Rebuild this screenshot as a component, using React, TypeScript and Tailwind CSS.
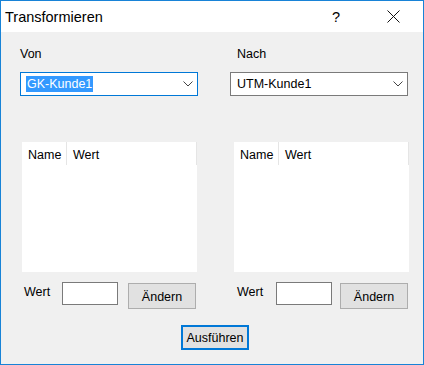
const font = { fontFamily: '"Liberation Sans", Arial, sans-serif' };

function Chevron() {
  return (
    <svg width="10" height="6" viewBox="0 0 10 6" className="text-[#444]">
      <path d="M0.5 0.5 L5 5 L9.5 0.5" fill="none" stroke="currentColor" strokeWidth="1" />
    </svg>
  );
}

function Combo({ text, focused }: { text: string; focused?: boolean }) {
  return (
    <div
      className={
        "flex h-[24px] w-[178px] items-center justify-between border bg-white pr-[4px] pl-[5px] " +
        (focused ? "border-[#0078d7]" : "border-[#7a7a7a]")
      }
    >
      {focused ? (
        <span className="bg-[#3399ff] px-[1px] leading-[16px] text-white">{text}</span>
      ) : (
        <span className="px-[1px] leading-[16px] text-black">{text}</span>
      )}
      <Chevron />
    </div>
  );
}

function List() {
  return (
    <div className="h-[130px] w-[175px] bg-white">
      <div className="flex h-[23px] text-black">
        <div className="w-[45px] border-r border-[#e5e5e5] pl-[6px] pt-[6px] leading-[14px]">Name</div>
        <div className="flex-1 border-r border-[#e5e5e5] pl-[6px] pt-[6px] leading-[14px]">Wert</div>
      </div>
    </div>
  );
}

function ValueRow({ labelPad, labelW, gap }: { labelPad: number; labelW: string; gap: string }) {
  return (
    <div className="mt-[10px] flex items-start" style={{ paddingLeft: labelPad }}>
      <div className={labelW + " mt-[3px] leading-[14px] text-black"}>Wert</div>
      <div className="h-[23px] w-[56px] border border-[#7a7a7a] bg-white" />
      <button
        className={
          gap +
          " mt-[1px] flex h-[26px] w-[68px] items-center justify-center border border-[#adadad] bg-[#e1e1e1] pt-[1px] leading-[14px] text-black"
        }
      >
        Ändern
      </button>
    </div>
  );
}

export default function App() {
  return (
    <div
      className="flex h-[365px] w-[424px] flex-col border border-[#1883d7] text-[12.5px]"
      style={font}
    >
      <div className="flex h-[31px] items-center bg-white text-black">
        <span className="ml-[4px] text-[14.5px] leading-[18px]">Transformieren</span>
        <span className="ml-auto text-[14.5px] leading-[18px]">?</span>
        <svg width="13" height="13" viewBox="0 0 13 13" className="ml-[47px] mr-[23px]">
          <path d="M0.5 0.5 L12.5 12.5 M12.5 0.5 L0.5 12.5" stroke="#111" strokeWidth="1" />
        </svg>
      </div>
      <div className="flex flex-1 flex-col bg-[#f0f0f0]">
        <div className="flex pl-[19px]">
          <div className="flex w-[210px] flex-col">
            <div className="pt-[15px] leading-[14px] text-black">Von</div>
            <div className="mt-[11px]">
              <Combo text="GK-Kunde1" focused />
            </div>
            <div className="ml-[2px] mt-[46px]">
              <List />
            </div>
            <ValueRow labelPad={4} labelW="w-[38px]" gap="ml-[10px]" />
          </div>
          <div className="flex w-[180px] flex-col">
            <div className="pl-[7px] pt-[15px] leading-[14px] text-black">Nach</div>
            <div className="mt-[11px]">
              <Combo text="UTM-Kunde1" />
            </div>
            <div className="ml-[4px] mt-[46px]">
              <List />
            </div>
            <ValueRow labelPad={7} labelW="w-[39px]" gap="ml-[8px]" />
          </div>
        </div>
        <div className="mt-[16px] flex pl-[180px]">
          <button className="flex h-[25px] w-[68px] items-center justify-center border-2 border-[#0078d7] bg-[#e1e1e1] leading-[14px] text-black">
            Ausführen
          </button>
        </div>
      </div>
    </div>
  );
}
